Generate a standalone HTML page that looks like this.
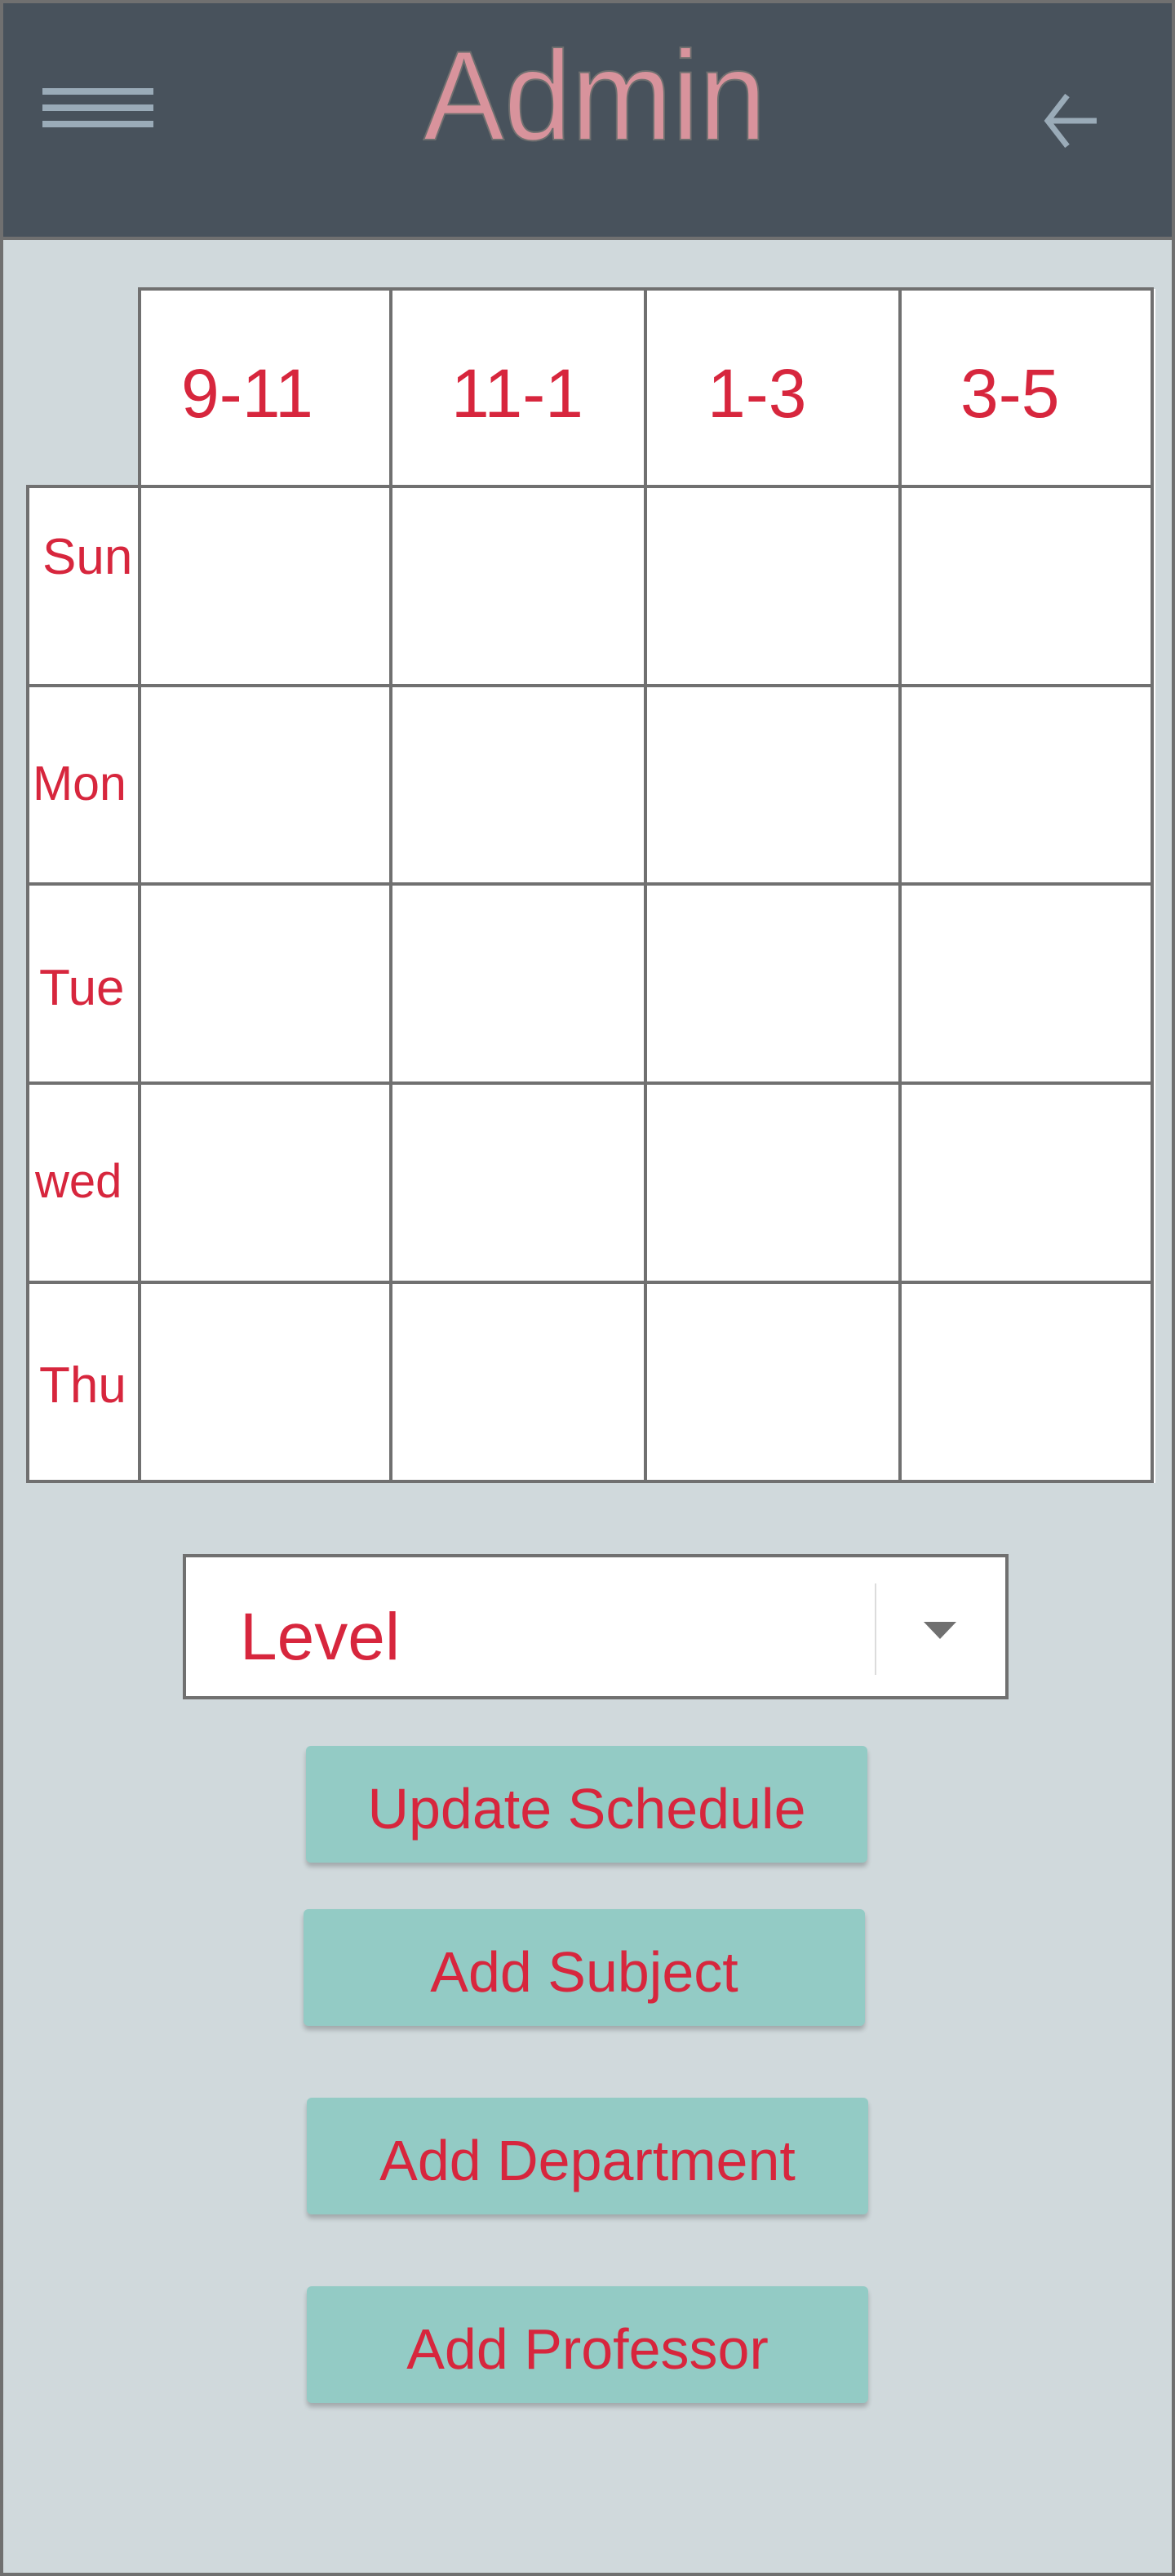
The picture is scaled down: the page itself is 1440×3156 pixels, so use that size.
<!DOCTYPE html>
<html><head><meta charset="utf-8"><style>
*{margin:0;padding:0;box-sizing:border-box}
body{width:1440px;height:3156px;background:#d0d9dc;position:relative;overflow:hidden;font-family:"Liberation Sans",sans-serif}
.frame{position:absolute;left:0;top:0;width:1440px;height:3156px;border:4px solid #707070}
.hdr{position:absolute;left:0;top:0;width:1440px;height:294px;background:#48525c;border:4px solid #707070}
.bar{position:absolute;left:52px;width:136px;height:8px;background:#9aabb8}
.abs{position:absolute}
.v{position:absolute;width:4px;background:#707070}
.h{position:absolute;height:4px;background:#707070}
.red{color:#d7263d}
.btn{position:absolute;background:#93cbc5;border-radius:6px;box-shadow:0 5px 6px rgba(0,0,0,0.22);color:#d7263d;font-size:70px;text-align:center;line-height:155px;height:143px}
</style></head><body>
<div class="frame"></div>
<div class="hdr"></div>
<div class="bar" style="top:108px"></div>
<div class="bar" style="top:128px"></div>
<div class="bar" style="top:148px"></div>
<div class="abs" style="left:504px;top:28px;width:450px;text-align:center;font-size:156px;line-height:180px;color:#d8939c;-webkit-text-stroke:2px #6f6f6f;transform:scaleX(0.95)">Admin</div>
<svg class="abs" style="left:1278px;top:114px" width="70" height="70" viewBox="0 0 70 70"><path d="M30 3 L6 34 L30 65 M6 34 L66 34" stroke="#9aabb8" stroke-width="7" fill="none"/></svg>

<div class="abs" style="left:169px;top:354px;width:1247px;height:1463px;background:#fff"></div>
<div class="abs" style="left:34px;top:596px;width:140px;height:1221px;background:#fff"></div>
<div class="v" style="left:169px;top:354px;height:1463px"></div>
<div class="v" style="left:477px;top:354px;height:1463px"></div>
<div class="v" style="left:789px;top:354px;height:1463px"></div>
<div class="v" style="left:1101px;top:354px;height:1463px"></div>
<div class="v" style="left:1410px;top:354px;height:1463px"></div>
<div class="v" style="left:32px;top:596px;height:1221px"></div>
<div class="h" style="left:169px;top:352px;width:1245px"></div>
<div class="h" style="left:32px;top:594px;width:1382px"></div>
<div class="h" style="left:32px;top:838px;width:1382px"></div>
<div class="h" style="left:32px;top:1081px;width:1382px"></div>
<div class="h" style="left:32px;top:1325px;width:1382px"></div>
<div class="h" style="left:32px;top:1569px;width:1382px"></div>
<div class="h" style="left:32px;top:1813px;width:1382px"></div>

<div class="abs red" style="left:222px;top:432px;font-size:84px;line-height:100px">9-11</div>
<div class="abs red" style="left:553px;top:432px;font-size:84px;line-height:100px">11-1</div>
<div class="abs red" style="left:867px;top:432px;font-size:84px;line-height:100px">1-3</div>
<div class="abs red" style="left:1177px;top:432px;font-size:84px;line-height:100px">3-5</div>

<div class="abs red" style="left:52px;top:643px;font-size:62px;line-height:80px">Sun</div>
<div class="abs red" style="left:40px;top:922px;font-size:59px;line-height:76px">Mon</div>
<div class="abs red" style="left:48px;top:1171px;font-size:62px;line-height:80px">Tue</div>
<div class="abs red" style="left:43px;top:1412px;font-size:58px;line-height:72px">wed</div>
<div class="abs red" style="left:48px;top:1658px;font-size:62px;line-height:80px">Thu</div>

<div class="abs" style="left:224px;top:1904px;width:1012px;height:178px;background:#fff;border:4px solid #707070"></div>
<div class="abs red" style="left:294px;top:1956px;font-size:82px;line-height:100px">Level</div>
<div class="abs" style="left:1072px;top:1940px;width:2px;height:112px;background:#dcdcdc"></div>
<svg class="abs" style="left:1132px;top:1987px" width="40" height="21"><path d="M0 0 L40 0 L20 21Z" fill="#707070"/></svg>

<div class="btn" style="left:375px;top:2139px;width:688px">Update Schedule</div>
<div class="btn" style="left:372px;top:2339px;width:688px">Add Subject</div>
<div class="btn" style="left:376px;top:2570px;width:688px">Add Department</div>
<div class="btn" style="left:376px;top:2801px;width:688px">Add Professor</div>
</body></html>
